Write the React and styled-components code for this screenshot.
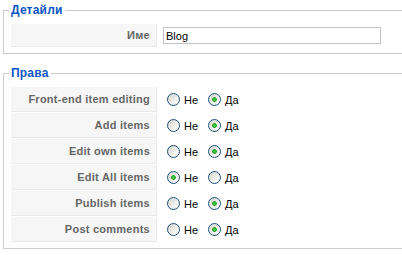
import React from 'react';
import styled, { createGlobalStyle } from 'styled-components';

const GlobalStyle = createGlobalStyle`
  html, body {
    margin: 0;
    padding: 0;
    background: #fff;
    overflow: hidden;
  }
  body {
    font-family: Arial, "Liberation Sans", Helvetica, sans-serif;
    font-size: 11px;
    color: #000;
  }
`;

const Page = styled.div`
  padding: 3px 0 0 3px;
`;

const Fieldset = styled.fieldset`
  border: 1px solid #cccccc;
  border-right: none;
  margin: 0 0 12px 0;
  padding: 7px 0 6px 7px;
  min-width: 0;
`;

const Legend = styled.legend`
  color: #0b55c4;
  font-size: 12px;
  font-weight: bold;
  line-height: 14px;
  letter-spacing: 0.2px;
  padding: 0 2px;
  margin-left: -2px;
`;

const Table = styled.div`
  display: flex;
  flex-direction: column;
  gap: 1px;
`;

const Row = styled.div`
  display: flex;
  align-items: stretch;
  gap: 1px;
  height: ${(p) => p.$h}px;
`;

const Key = styled.div`
  width: 146px;
  box-sizing: border-box;
  background: #f6f6f6;
  border-right: 1px solid #e9e9e9;
  border-bottom: 1px solid #e9e9e9;
  color: #666666;
  font-weight: bold;
  letter-spacing: 0.25px;
  display: flex;
  align-items: center;
  justify-content: flex-end;
  padding-right: 6px;
`;

const Value = styled.div`
  display: flex;
  align-items: center;
  padding-left: 5px;
`;

const TextInput = styled.input`
  width: 218px;
  height: 17px;
  box-sizing: border-box;
  border: 1px solid #c0c0c0;
  padding: 0 2px;
  font-family: Arial, "Liberation Sans", Helvetica, sans-serif;
  font-size: 11px;
  color: #000;
  outline: none;
`;

const Radio = styled.input`
  appearance: none;
  -webkit-appearance: none;
  width: 13px;
  height: 13px;
  margin: 0 4px;
  border: 1px solid #1c5180;
  border-radius: 50%;
  box-sizing: border-box;
  background: linear-gradient(135deg, #d6d6cf 0%, #eeeeea 55%, #ffffff 100%);

  &:checked {
    background:
      radial-gradient(circle at 50% 50%, #4fd04f 0, #21a121 2px, transparent 2.6px),
      linear-gradient(135deg, #d6d6cf 0%, #eeeeea 55%, #ffffff 100%);
  }
`;

const Choice = styled.label`
  display: inline-flex;
  align-items: center;
  margin-right: 6px;
  font-size: 11px;
  color: #000;
`;

const perms = [
  ['Front-end item editing', 1],
  ['Add items', 1],
  ['Edit own items', 1],
  ['Edit All items', 0],
  ['Publish items', 1],
  ['Post comments', 1],
];

export default function App() {
  return (
    <Page>
      <GlobalStyle />
      <Fieldset>
        <Legend>Детайли</Legend>
        <Table>
          <Row $h={23}>
            <Key>Име</Key>
            <Value>
              <TextInput defaultValue="Blog" />
            </Value>
          </Row>
        </Table>
      </Fieldset>
      <Fieldset>
        <Legend>Права</Legend>
        <Table>
          {perms.map(([name, yes], i) => (
            <Row key={name} $h={25}>
              <Key>{name}</Key>
              <Value>
                <Choice>
                  <Radio type="radio" name={'p' + i} defaultChecked={!yes} />
                  Не
                </Choice>
                <Choice>
                  <Radio type="radio" name={'p' + i} defaultChecked={!!yes} />
                  Да
                </Choice>
              </Value>
            </Row>
          ))}
        </Table>
      </Fieldset>
    </Page>
  );
}
